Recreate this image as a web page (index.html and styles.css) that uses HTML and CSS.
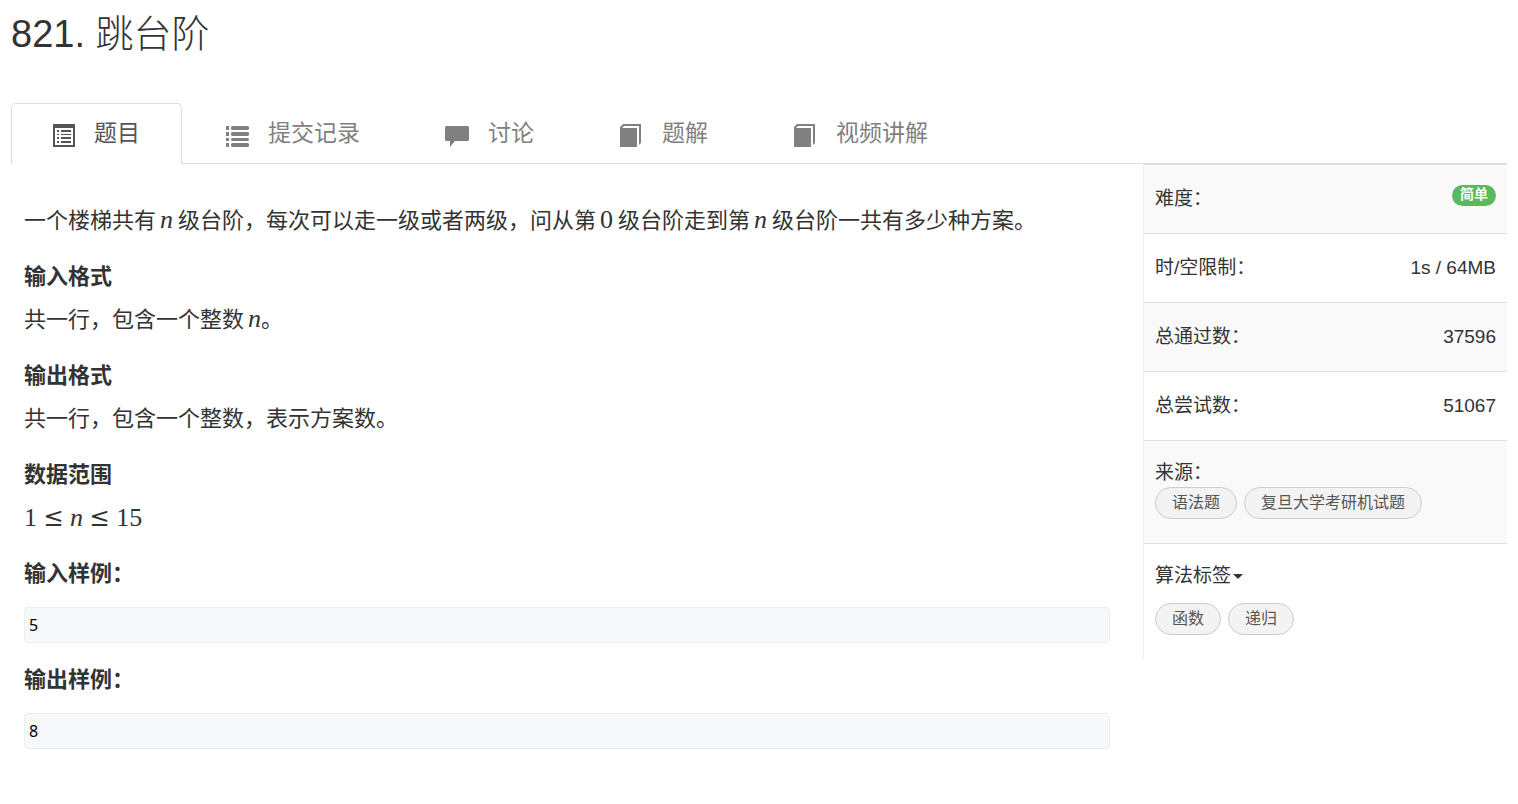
FILE: index.html
```html
<!DOCTYPE html>
<html lang="zh-CN">
  <head>
    <meta charset="UTF-8" />
    <meta name="viewport" content="width=device-width, initial-scale=1.0" />
    <title>821. 跳台阶</title>
    <link rel="stylesheet" href="styles.css">
  </head>
  <body>
    <h1 class="title">821. 跳台阶</h1>

    <!-- 标签页 -->
    <nav class="tabs">
      <a class="tab active" href="#problem">
        <svg class="icon" viewBox="0 0 24 24">
          <path fill-rule="evenodd" d="M0 1h22v23H0zM2 5v17h18V5z" />
          <path d="M4 7h2v2H4zM8 7h10v2H8zM4 11h2v1H4zM8 11h10v1H8zM4 14h2v2H4zM8 14h10v2H8zM4 18h2v2H4zM8 18h10v2H8z" />
        </svg>
        <span>题目</span>
      </a>
      <a class="tab" href="#submission">
        <svg class="icon" viewBox="2 0 24 24">
          <path d="M1 3h3v4H1zM1 9h3v4H1zM1 15h3v3H1zM1 20h3v4H1z" />
          <path d="M7 3h16l1 1v2l-1 1H7L6 6V4zM7 9h16l1 1v2l-1 1H7l-1-1v-2zM7 15h16l1 1v1l-1 1H7l-1-1v-1zM7 20h16l1 1v2l-1 1H7l-1-1v-2z" />
        </svg>
        <span>提交记录</span>
      </a>
      <a class="tab" href="#discussion">
        <svg class="icon" viewBox="2 0 24 24">
          <path d="M1 3h22l1 1v13l-1 1H10l-5 6v-6H1l-1-1V4z" />
        </svg>
        <span>讨论</span>
      </a>
      <a class="tab" href="#solution">
        <svg class="icon" viewBox="2 0 24 24">
          <path d="M1 4l3-3h18v19l-2 2V3H5L3 5h15v19H1z" />
        </svg>
        <span>题解</span>
      </a>
      <a class="tab" href="#video">
        <svg class="icon" viewBox="2 0 24 24">
          <path d="M1 4l3-3h18v19l-2 2V3H5L3 5h15v19H1z" />
        </svg>
        <span>视频讲解</span>
      </a>
    </nav>

    <div class="content">
      <!-- 题目描述 -->
      <main class="problem" id="problem">
        <p>一个楼梯共有<span class="math"><i>n</i></span>级台阶，每次可以走一级或者两级，问从第<span class="math">0</span>级台阶走到第<span class="math"><i>n</i></span>级台阶一共有多少种方案。</p>
        <h4>输入格式</h4>
        <p>共一行，包含一个整数<span class="math last"><i>n</i></span>。</p>
        <h4>输出格式</h4>
        <p>共一行，包含一个整数，表示方案数。</p>
        <h4>数据范围</h4>
        <p class="range"><span>1</span><span class="rel">≤</span><i>n</i><span class="rel">≤</span><span>15</span></p>
        <h4>输入样例：</h4>
        <pre>5</pre>
        <h4>输出样例：</h4>
        <pre>8</pre>
      </main>

      <!-- 题目信息 -->
      <aside class="info">
        <table>
          <tr>
            <th scope="row">难度：</th>
            <td><span class="badge">简单</span></td>
          </tr>
          <tr>
            <th scope="row">时/空限制：</th>
            <td>1s / 64MB</td>
          </tr>
          <tr>
            <th scope="row">总通过数：</th>
            <td>37596</td>
          </tr>
          <tr>
            <th scope="row">总尝试数：</th>
            <td>51067</td>
          </tr>
          <tr>
            <td class="wide" colspan="2">
              来源：
              <div class="tags">
                <a class="tag" href="#grammar">语法题</a>
                <a class="tag" href="#fudan">复旦大学考研机试题</a>
              </div>
            </td>
          </tr>
          <tr>
            <td class="wide" colspan="2">
              <button class="toggle" type="button">算法标签<span class="caret"></span></button>
              <div class="tags algorithm">
                <a class="tag" href="#function">函数</a>
                <a class="tag" href="#recursion">递归</a>
              </div>
            </td>
          </tr>
        </table>
      </aside>
    </div>
  </body>
</html>
```

FILE: styles.css
```css
* {
  box-sizing: border-box;
}
body {
  margin: 0;
  padding: 0 11px;
  color: #333;
  background-color: #fff;
  font-family: "Liberation Sans", "Noto Sans CJK SC", sans-serif;
}
a {
  text-decoration: none;
}
.title {
  margin: 0 0 47px;
  padding-top: 12px;
  font-size: 38px;
  line-height: 44px;
  font-weight: 200;
}

/* 标签页 */
.tabs {
  display: flex;
  gap: 3px;
  border-bottom: 1px solid #ddd;
}
.tab {
  display: flex;
  gap: 18px;
  height: 61px;
  margin-bottom: -1px;
  padding: 13px 41px;
  border: 1px solid transparent;
  border-radius: 5px 5px 0 0;
  color: gray;
  font-size: 23px;
  line-height: 33px;
}
.tab.active {
  color: #555;
  background-color: #fff;
  border-color: #ddd;
  border-bottom-color: #fff;
}
.icon {
  width: 24px;
  height: 24px;
  margin-top: 6px;
  margin-right: -1px;
  overflow: visible;
  fill: currentColor;
}

.content {
  display: flex;
  align-items: flex-start;
}

/* 题目描述 */
.problem {
  flex: 1;
  padding: 42px 33px 0 13px;
  font-size: 22px;
  line-height: 30px;
}
.problem p {
  margin: 0 0 26px;
}
.problem h4 {
  margin: 0 0 13px;
  font-size: 22px;
  font-weight: bold;
}
.math,
.range {
  font-family: "Liberation Serif", serif;
  font-size: 26px;
  line-height: 1;
}
.math {
  margin: 0 5px 0 4px;
}
.math.last {
  margin-right: 0;
}
.problem .range {
  display: flex;
  gap: 7px;
  line-height: 30px;
}
.rel {
  font-family: "DejaVu Math TeX Gyre", "DejaVu Serif", serif;
  font-size: 24px;
}
.problem pre {
  height: 36px;
  margin: 18px 0 22px;
  padding: 0 4px;
  border: 1px solid #eee;
  border-radius: 4px;
  background-color: #f7f8fa;
  color: #000;
  font-family: "Noto Sans", sans-serif;
  font-size: 16px;
  line-height: 34px;
}

/* 题目信息 */
.info {
  width: 364px;
  border-left: 1px solid #eee;
}
.info table {
  width: 100%;
  border-spacing: 0;
  font-size: 19px;
  line-height: 28px;
}
.info tr:nth-child(odd) {
  background-color: #f9f9f9;
}
.info th,
.info td {
  padding: 20px 11px;
  border-top: 1px solid #ddd;
  text-align: left;
  font-weight: normal;
  vertical-align: top;
}
.info td {
  text-align: right;
}
.info td.wide {
  padding: 18px 11px 24px;
  text-align: left;
}
.badge {
  display: block;
  width: fit-content;
  margin-left: auto;
  padding: 0 8px 3px;
  border-radius: 11px;
  background-color: #5cb85c;
  color: #fff;
  font-size: 14px;
  font-weight: bold;
  line-height: 18px;
}
.tags {
  display: flex;
  flex-wrap: wrap;
  gap: 7px;
}
.tags.algorithm {
  margin-top: 13px;
}
.tag {
  padding: 0 16px;
  border: 1px solid #ccc;
  border-radius: 16px;
  background-color: #f3f3f3;
  color: #555;
  font-size: 16px;
  line-height: 30px;
}
.toggle {
  display: flex;
  align-items: center;
  gap: 2px;
  padding: 0;
  border: none;
  background: none;
  color: inherit;
  font: inherit;
}
.caret {
  border-top: 5px solid #333;
  border-left: 5px solid transparent;
  border-right: 5px solid transparent;
}
```
